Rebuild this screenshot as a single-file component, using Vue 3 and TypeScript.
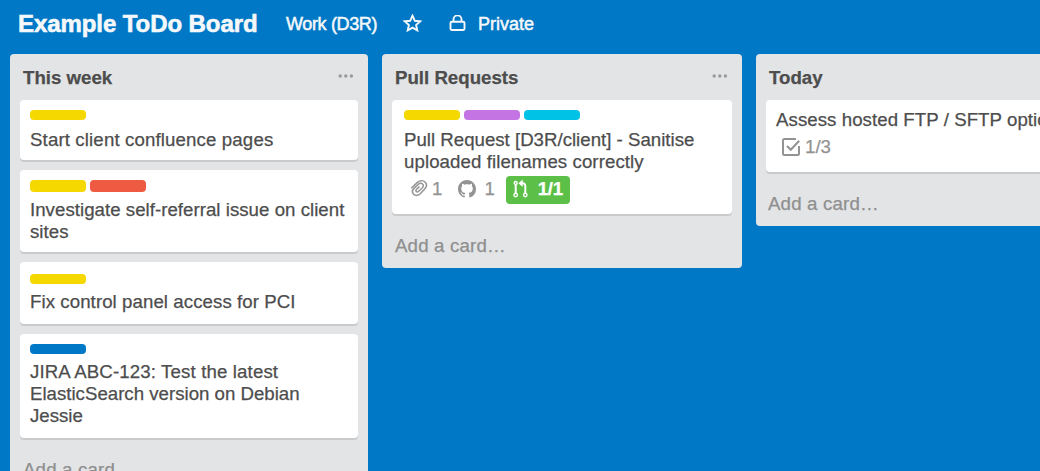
<script setup lang="ts">
type Label = 'yellow' | 'red' | 'purple' | 'sky' | 'blue'

interface Card {
  id: string
  labels: Label[]
  lines: string[]
  badges?: 'pull' | 'checklist'
}

interface List {
  id: string
  title: string
  cards: Card[]
}

const lists: List[] = [
  {
    id: 'week',
    title: 'This week',
    cards: [
      { id: 'confluence', labels: ['yellow'], lines: ['Start client confluence pages'] },
      { id: 'referral', labels: ['yellow', 'red'], lines: ['Investigate self-referral issue on client', 'sites'] },
      { id: 'pci', labels: ['yellow'], lines: ['Fix control panel access for PCI'] },
      { id: 'jira', labels: ['blue'], lines: ['JIRA ABC-123: Test the latest', 'ElasticSearch version on Debian', 'Jessie'] },
    ],
  },
  {
    id: 'pulls',
    title: 'Pull Requests',
    cards: [
      {
        id: 'sanitise',
        labels: ['yellow', 'purple', 'sky'],
        lines: ['Pull Request [D3R/client] - Sanitise', 'uploaded filenames correctly'],
        badges: 'pull',
      },
    ],
  },
  {
    id: 'today',
    title: 'Today',
    cards: [{ id: 'ftp', labels: [], lines: ['Assess hosted FTP / SFTP options'], badges: 'checklist' }],
  },
]
</script>

<template>
  <div class="board">
    <header class="bar">
      <h1 class="name">Example ToDo Board</h1>
      <span class="team">Work (D3R)</span>
      <svg class="star" viewBox="0 0 20 20" width="20" height="20">
        <path d="M10.500 1.700 12.800 6.800 18.300 7.300 14.100 11 15.300 16.400 10.500 13.600 5.700 16.400 6.900 11 2.700 7.300 8.200 6.800Z" />
      </svg>
      <svg class="lock" viewBox="0 0 18 18" width="18" height="18">
        <rect x="2.500" y="6.700" width="14" height="8.300" rx="1.200" />
        <path d="M5.500 6.700V4.400a4 4 0 0 1 8 0V6.700" />
      </svg>
      <span class="privacy">Private</span>
    </header>

    <main class="lists">
      <section v-for="list in lists" :key="list.id" class="list" :class="list.id">
        <div class="head">
          <h2>{{ list.title }}</h2>
          <svg class="dots" viewBox="0 0 16 4" width="16" height="4">
            <circle cx="2.200" cy="2" r="1.700" />
            <circle cx="7.800" cy="2" r="1.700" />
            <circle cx="13.400" cy="2" r="1.700" />
          </svg>
        </div>
        <article v-for="card in list.cards" :key="card.id" class="card" :class="card.id">
          <div v-if="card.labels.length" class="labels">
            <i v-for="label in card.labels" :key="label" class="label" :class="label"></i>
          </div>
          <p class="text">
            <span v-for="line in card.lines" :key="line" class="line">{{ line }}</span>
          </p>
          <div v-if="card.badges === 'pull'" class="badges">
            <svg class="clip" viewBox="0 0 18 18" width="18" height="18">
              <path d="M1.200 9.300 7.200 3.600C9.400 1.500 12.800.8 15 3c2.200 2.200 1.600 5-.3 7L10.500 14.500c-2.200 2.200-5.200 2.500-6.900.8-1.700-1.800-1.200-4.400.6-6.200L8.500 5.300c1.300-1.200 3.100-1.300 4.100-.2 1.100 1.100.8 2.700-.4 3.900L8.700 12.200c-.8.8-1.800.9-2.400.3-.6-.6-.4-1.500.3-2.200L9.500 7.600" />
            </svg>
            <span class="count">1</span>
            <svg class="github" viewBox="0 0 16 16" width="18" height="18">
              <path d="M8 0C3.580 0 0 3.580 0 8c0 3.540 2.290 6.530 5.470 7.590.4.070.55-.17.55-.38 0-.19-.01-.82-.01-1.490-2.010.37-2.530-.49-2.690-.94-.09-.23-.48-.94-.82-1.130-.28-.15-.68-.52-.01-.53.63-.01 1.080.58 1.230.82.72 1.210 1.870.87 2.330.66.07-.52.28-.87.51-1.070-1.780-.2-3.640-.89-3.640-3.950 0-.87.31-1.590.82-2.150-.08-.2-.36-1.020.08-2.120 0 0 .67-.21 2.200.82.64-.18 1.320-.27 2-.27s1.360.09 2 .27c1.530-1.040 2.200-.82 2.200-.82.44 1.100.16 1.920.08 2.120.51.56.82 1.270.82 2.150 0 3.070-1.870 3.750-3.650 3.950.29.25.54.73.54 1.480 0 1.070-.01 1.930-.01 2.200 0 .21.15.46.55.38A8.010 8.010 0 0 0 16 8c0-4.420-3.580-8-8-8Z" />
            </svg>
            <span class="count wide">1</span>
            <span class="merged">
              <svg viewBox="0 0 16 20" width="16" height="20">
                <circle cx="2.700" cy="4" r="1.500" />
                <circle cx="2.700" cy="16" r="1.700" />
                <circle cx="12.300" cy="16" r="1.700" />
                <path class="branch" d="M2.700 5.500V14M8.500 4.200H9.800Q12.300 4.200 12.300 7V14" />
                <path class="arrow" d="M9.700 .5V8L5.400 4.200Z" />
              </svg>
              <b>1/1</b>
            </span>
          </div>
          <div v-if="card.badges === 'checklist'" class="badges">
            <svg class="check" viewBox="0 0 20 20" width="20" height="20">
              <path d="M15 2H3.500A1.500 1.500 0 0 0 2 3.500V16.500a1.500 1.500 0 0 0 1.500 1.500H16.500a1.500 1.500 0 0 0 1.500-1.500V9" />
              <path d="M6 9 9.800 12.800 18.200 3.800" />
            </svg>
            <span class="count">1/3</span>
          </div>
        </article>
        <div class="add">Add a card…</div>
      </section>
    </main>
  </div>
</template>

<style>
body {
  margin: 0;
  overflow: hidden;
}
</style>

<style scoped>
.board {
  width: 1040px;
  height: 471px;
  overflow: hidden;
  background: #0078c5;
  color: #4d4d4d;
  font: 18.67px/22px "Liberation Sans", Arial, sans-serif;
  white-space: nowrap;
  -webkit-text-stroke: 0.25px currentColor;
}
h1, h2, p {
  margin: 0;
}
svg {
  flex: none;
  display: block;
  fill: none;
  stroke: currentColor;
}
.bar {
  display: flex;
  align-items: center;
  box-sizing: border-box;
  height: 54px;
  padding: 0 0 7px 18px;
  color: #f5f8fa;
}
.name {
  width: 268px;
  font-size: 24px;
  line-height: 30px;
  letter-spacing: -0.08px;
  -webkit-text-stroke: 0.6px currentColor;
}
.team, .privacy {
  font-size: 18px;
  -webkit-text-stroke: 0.5px currentColor;
}
.team {
  width: 116px;
  letter-spacing: -0.35px;
}
.star {
  stroke-width: 1.900;
}
.lock {
  margin-left: 26px;
  stroke-width: 1.900;
}
.privacy {
  margin-left: 12px;
}
.lists {
  display: flex;
  align-items: flex-start;
  gap: 14px;
}
.list {
  flex: none;
  box-sizing: border-box;
  width: 360px;
  padding: 0 10px;
  border-radius: 4px;
  background: #e2e4e6;
}
.week {
  width: 358px;
  margin-left: 10px;
}
.head {
  display: flex;
  justify-content: space-between;
  height: 46px;
  padding: 0 3px;
}
h2 {
  padding-top: 13px;
  font-size: 18.67px;
  line-height: 22px;
}
.dots {
  margin: 20px 1px 0 0;
  fill: #999;
  stroke: none;
}
.card {
  margin-bottom: 10px;
  padding: 10px 10px 9px;
  border-radius: 4px;
  background: #fff;
  box-shadow: 0 2px 0 #c8cacc;
}
.confluence {
  letter-spacing: 0.13px;
}
.referral {
  letter-spacing: 0.03px;
}
.pci {
  padding: 12px 10px 11px;
  letter-spacing: 0.07px;
}
.jira {
  padding-bottom: 11px;
}
.jira .line:first-child {
  letter-spacing: 0.13px;
}
.sanitise {
  padding: 10px 12px;
}
.sanitise .line:nth-child(2) {
  letter-spacing: 0.08px;
}
.ftp {
  padding: 9px 10px;
}
.ftp .line {
  letter-spacing: 0.06px;
}
.labels {
  display: flex;
  gap: 4px;
  margin-bottom: 9px;
}
.referral .labels, .pci .labels, .jira .labels {
  margin-bottom: 7px;
}
.label {
  width: 56px;
  height: 10px;
  border-radius: 4px;
}
.referral .label {
  height: 12px;
}
.yellow { background: #f5d800; }
.red { background: #ef5a42; }
.purple { background: #c474e3; }
.sky { background: #00c2e6; }
.blue { background: #0078c5; }
.line {
  display: block;
}
.badges {
  display: flex;
  align-items: center;
  height: 28px;
  margin-top: 3px;
  color: #939393;
}
.ftp .badges {
  margin-top: 1px;
  margin-bottom: 1px;
  padding-left: 5px;
  height: 30px;
}
.clip {
  margin: -4px 0 0 6px;
  stroke-width: 1.500;
}
.count {
  margin: -2px 0 0 4px;
}
.ftp .count {
  margin-top: 0;
}
.github {
  margin: -2px 0 0 16px;
  fill: currentColor;
  stroke: none;
}
.wide {
  margin-left: 8px;
}
.merged {
  display: flex;
  align-items: center;
  box-sizing: border-box;
  width: 64px;
  height: 28px;
  margin-left: 11px;
  padding: 0 0 2px 7px;
  gap: 9px;
  border-radius: 4px;
  background: #5cbf47;
  color: #fff;
}
.merged b {
  letter-spacing: -0.3px;
}
.merged svg {
  stroke-width: 1.400;
}
.merged .branch {
  stroke-width: 2;
}
.merged .arrow {
  fill: currentColor;
  stroke: none;
}
.check {
  stroke-width: 2;
}
.add {
  box-sizing: border-box;
  height: 44px;
  padding: 11px 3px 0;
  color: #8f8f8f;
  letter-spacing: 0.18px;
}
.today .add {
  padding-left: 2px;
}
</style>
